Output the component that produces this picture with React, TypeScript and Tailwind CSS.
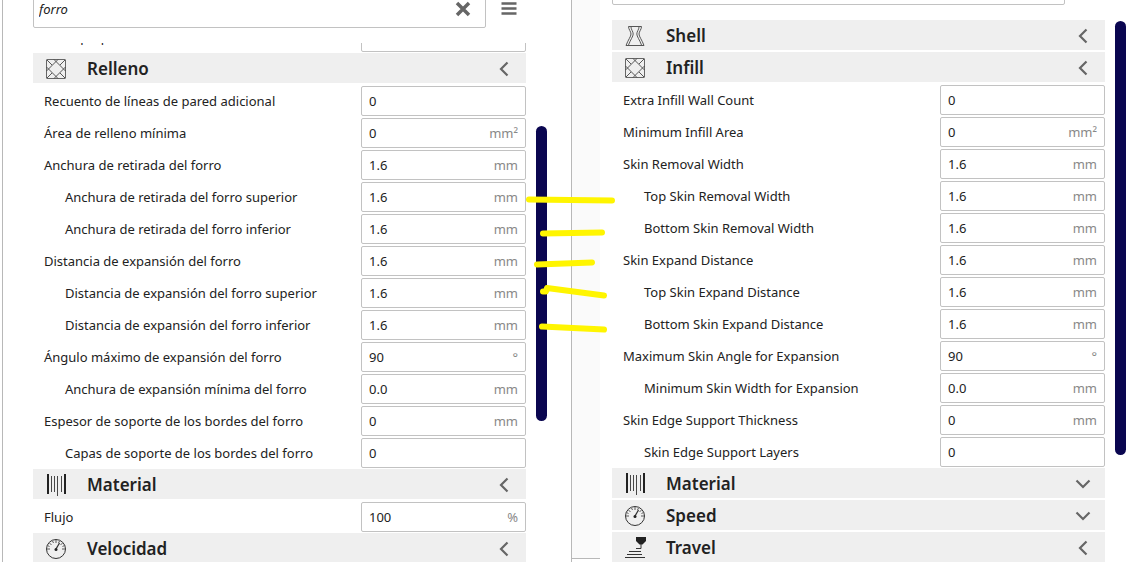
import { useId } from 'react';

type IconName = 'shell' | 'infill' | 'material' | 'speed' | 'travel';

type Item =
  | { kind: 'category'; title: string; icon: IconName; open?: boolean }
  | { kind: 'setting'; label: string; value: string; unit?: string; child?: boolean };

const spanish: Item[] = [
  { kind: 'setting', label: 'Superposición del forro', value: '', child: true },
  { kind: 'category', title: 'Relleno', icon: 'infill' },
  { kind: 'setting', label: 'Recuento de líneas de pared adicional', value: '0' },
  { kind: 'setting', label: 'Área de relleno mínima', value: '0', unit: 'mm²' },
  { kind: 'setting', label: 'Anchura de retirada del forro', value: '1.6', unit: 'mm' },
  { kind: 'setting', label: 'Anchura de retirada del forro superior', value: '1.6', unit: 'mm', child: true },
  { kind: 'setting', label: 'Anchura de retirada del forro inferior', value: '1.6', unit: 'mm', child: true },
  { kind: 'setting', label: 'Distancia de expansión del forro', value: '1.6', unit: 'mm' },
  { kind: 'setting', label: 'Distancia de expansión del forro superior', value: '1.6', unit: 'mm', child: true },
  { kind: 'setting', label: 'Distancia de expansión del forro inferior', value: '1.6', unit: 'mm', child: true },
  { kind: 'setting', label: 'Ángulo máximo de expansión del forro', value: '90', unit: '°' },
  { kind: 'setting', label: 'Anchura de expansión mínima del forro', value: '0.0', unit: 'mm', child: true },
  { kind: 'setting', label: 'Espesor de soporte de los bordes del forro', value: '0', unit: 'mm' },
  { kind: 'setting', label: 'Capas de soporte de los bordes del forro', value: '0', child: true },
  { kind: 'category', title: 'Material', icon: 'material' },
  { kind: 'setting', label: 'Flujo', value: '100', unit: '%' },
  { kind: 'category', title: 'Velocidad', icon: 'speed' },
];

const english: Item[] = [
  { kind: 'category', title: 'Shell', icon: 'shell' },
  { kind: 'category', title: 'Infill', icon: 'infill' },
  { kind: 'setting', label: 'Extra Infill Wall Count', value: '0' },
  { kind: 'setting', label: 'Minimum Infill Area', value: '0', unit: 'mm²' },
  { kind: 'setting', label: 'Skin Removal Width', value: '1.6', unit: 'mm' },
  { kind: 'setting', label: 'Top Skin Removal Width', value: '1.6', unit: 'mm', child: true },
  { kind: 'setting', label: 'Bottom Skin Removal Width', value: '1.6', unit: 'mm', child: true },
  { kind: 'setting', label: 'Skin Expand Distance', value: '1.6', unit: 'mm' },
  { kind: 'setting', label: 'Top Skin Expand Distance', value: '1.6', unit: 'mm', child: true },
  { kind: 'setting', label: 'Bottom Skin Expand Distance', value: '1.6', unit: 'mm', child: true },
  { kind: 'setting', label: 'Maximum Skin Angle for Expansion', value: '90', unit: '°' },
  { kind: 'setting', label: 'Minimum Skin Width for Expansion', value: '0.0', unit: 'mm', child: true },
  { kind: 'setting', label: 'Skin Edge Support Thickness', value: '0', unit: 'mm' },
  { kind: 'setting', label: 'Skin Edge Support Layers', value: '0', child: true },
  { kind: 'category', title: 'Material', icon: 'material', open: true },
  { kind: 'category', title: 'Speed', icon: 'speed', open: true },
  { kind: 'category', title: 'Travel', icon: 'travel' },
];

function CategoryIcon({ name }: { name: IconName }) {
  return (
    <svg viewBox="0 0 22 22" className="h-[22px] w-[22px] shrink-0 overflow-visible" fill="none" stroke="#333" aria-hidden="true">
      {name === 'infill' && (
        <>
          <rect x="2.500" y="1.500" width="19" height="19" rx="0.5" stroke="#666" />
          <path
            d="M2.500 13 14 1.500M10 1.500 21.500 13M2.500 9 14 20.500M10 20.500 21.500 9M3 2l5 5M21 2l-5 5M3 20l5-5M21 20l-5-5"
            stroke="#444"
            strokeWidth="0.9"
          />
        </>
      )}
      {name === 'shell' && (
        <>
          <path d="M5.500 1.500h13c0 3-2.500 5-2.500 7.500s3 6 5 11.500H3C5 15 8 11.500 8 9S5.500 4.500 5.500 1.500z" stroke="#555" />
          <path d="M8 2c0 2.500 2.200 4.500 2.200 7S7.500 14.500 5.500 20M16 2c0 2.500-2.200 4.500-2.200 7s2.700 5.500 4.700 11" strokeWidth="0.8" />
        </>
      )}
      {name === 'material' && (
        <>
          <path d="M4 0v20M21 0v20" strokeWidth="2" stroke="#222" />
          <path d="M7.500 2v16M10.500 2v16M13.500 2v20M17.500 2v16" strokeWidth="0.9" />
        </>
      )}
      {name === 'speed' && (
        <>
          <circle cx="12" cy="11" r="9.500" />
          <path d="M12 2v3M3 11h3M18 11h3M5.500 5l2 2M16.500 7l2-2M8.500 3l1 2M15.500 3l-1 2M3.500 7.500l2 1M20.500 7.500l-2 1" strokeWidth="0.8" />
          <path d="m12 11 3.500-6" strokeWidth="1.300" />
          <circle cx="12" cy="11.500" r="1.500" fill="#222" stroke="none" />
        </>
      )}
      {name === 'travel' && (
        <>
          <path d="M13 0h10v4L19.500 7.500h-3L13 4z" fill="#222" stroke="none" />
          <path d="M18 7v4.500h-5M6 14.500h12M4 17.500h15M2 20.500h20" />
        </>
      )}
    </svg>
  );
}

function Category({ title, icon, open }: { title: string; icon: IconName; open?: boolean }) {
  return (
    <div className="h-8 pb-0.5">
      <button type="button" aria-expanded={!!open} className="flex h-[30px] w-full items-center bg-[#efefef] pt-0.5 pr-3.5 pl-[11px] text-left">
        <CategoryIcon name={icon} />
        <span className="flex-1 pl-[21px] text-[17px] leading-6 font-semibold text-[#222]">{title}</span>
        <svg viewBox="0 0 16 16" className="h-4 w-4" fill="none" stroke="#666" strokeWidth="2.200" aria-hidden="true">
          <path d={open ? 'M1.500 4.500 8 11l6.500-6.500' : 'M11.500 1.500 5 8l6.500 6.500'} />
        </svg>
      </button>
    </div>
  );
}

function Setting({ label, value, unit, child }: { label: string; value: string; unit?: string; child?: boolean }) {
  const id = useId();
  return (
    <div className="flex h-8 items-center">
      <label htmlFor={id} className={child ? 'flex-1 pl-8 whitespace-nowrap' : 'flex-1 pl-[11px] whitespace-nowrap'}>
        {label}
      </label>
      <div className="flex h-[30px] w-[165px] shrink-0 items-center rounded-xs border border-[#c2c2c2] bg-white px-[7px]">
        <input id={id} defaultValue={value} className="w-0 flex-1 outline-none" />
        {unit && <span className="text-[#888]">{unit}</span>}
      </div>
    </div>
  );
}

function SettingList({ items }: { items: Item[] }) {
  return (
    <>
      {items.map((item, i) => (item.kind === 'category' ? <Category key={i} {...item} /> : <Setting key={i} {...item} />))}
    </>
  );
}

function SearchBar({ query, label }: { query: string; label: string }) {
  return (
    <div className="flex h-9 items-center">
      <div className="flex h-9 flex-1 items-center rounded-xs border border-[#c2c2c2] bg-white pr-[13px] pb-0.5 pl-[5px]">
        <input aria-label={label} defaultValue={query} className="w-0 flex-1 italic outline-none" />
        <button type="button" aria-label="Clear">
          <svg viewBox="0 0 18 18" className="h-[18px] w-[18px]" stroke="#666" strokeWidth="3.500" aria-hidden="true">
            <path d="m3 3 12 12M15 3 3 15" />
          </svg>
        </button>
      </div>
      <button type="button" aria-label="Menu" className="flex w-10 justify-center pr-0.5 pb-0.5 pl-2">
        <svg viewBox="0 0 16 16" className="h-4 w-4" stroke="#666" strokeWidth="2.500" aria-hidden="true">
          <path d="M0.500 2.500h15M0.500 7.500h15M0.500 12.500h15" />
        </svg>
      </button>
    </div>
  );
}

// highlighter strokes linking the rows of both panels
function Marks() {
  return (
    <svg
      viewBox="0 0 100 150"
      className="pointer-events-none absolute top-[190px] -left-[52px] h-[150px] w-[100px]"
      fill="none"
      stroke="#fff500"
      strokeWidth="6"
      strokeLinecap="round"
      strokeLinejoin="round"
      aria-hidden="true"
    >
      <path d="M9 9.500 92 10.500M23 43.500 82 42.500M17 74.500 72 72.500M23 101.500h3L27 98l57 7.500M22 136.500 84 139.500" />
    </svg>
  );
}

export default function App() {
  return (
    <div className="grid h-screen grid-cols-[572fr_28px_541fr] overflow-hidden bg-white font-['Noto_Sans',sans-serif] text-[13px] leading-5 text-[#222]">
      <section className="ml-0.5 flex overflow-hidden border-x border-[#b8b8b8] pl-[30px]">
        <div className="-mt-2 flex flex-1 flex-col">
          <SearchBar query="forro" label="Buscar" />
          <div className="mt-[15px] overflow-hidden">
            <div className="-mt-[22px]">
              <SettingList items={spanish} />
            </div>
          </div>
        </div>
        <div className="mt-[126px] mr-6 ml-2.5 h-[295px] w-[11px] rounded-full bg-[#0a0650]" />
      </section>

      <div className="relative z-10 flex flex-col">
        <div className="flex-1 border-b border-[#b8b8b8] bg-[#fafafa]" />
        <div className="h-[3px]" />
        <Marks />
      </div>

      <section className="flex overflow-hidden pl-3">
        <div className="-mt-[31px] flex flex-1 flex-col">
          <SearchBar query="" label="Search" />
          <div className="mt-[15px]">
            <SettingList items={english} />
          </div>
        </div>
        <div className="mt-[21px] mr-[15px] ml-2.5 h-[434px] w-[11px] rounded-full bg-[#0a0650]" />
      </section>
    </div>
  );
}
